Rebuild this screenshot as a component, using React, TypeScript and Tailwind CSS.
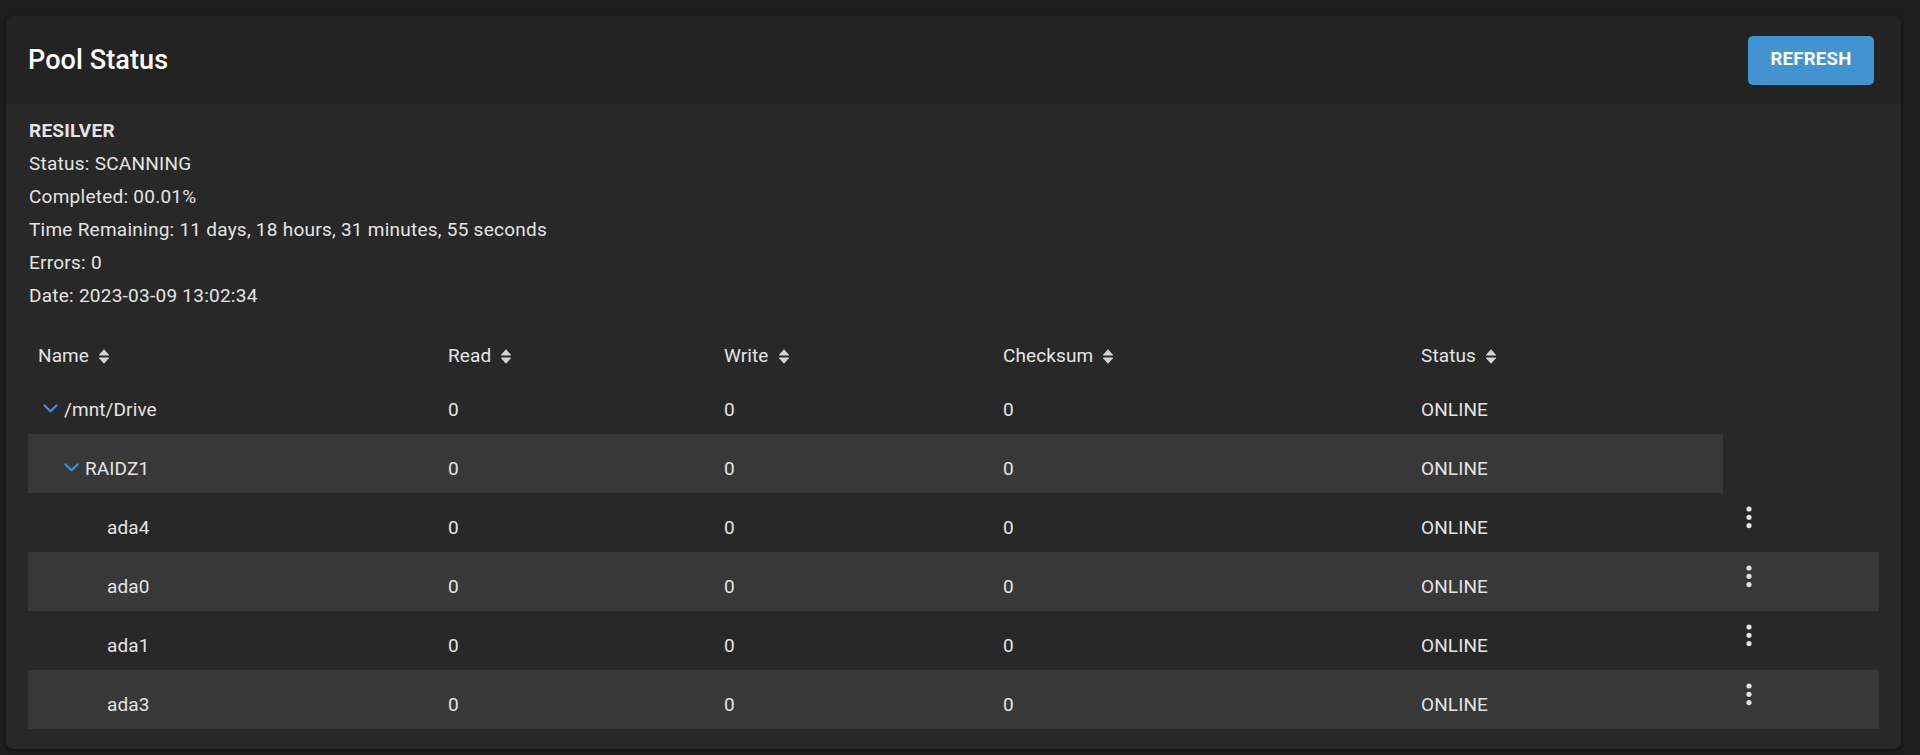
import React from "react"

// rows of the pool tree
type Row = {
  name: string
  level: 0 | 1 | 2
  expandable?: boolean
  disk?: boolean
}

const rows: Row[] = [
  { name: "/mnt/Drive", level: 0, expandable: true },
  { name: "RAIDZ1", level: 1, expandable: true },
  { name: "ada4", level: 2, disk: true },
  { name: "ada0", level: 2, disk: true },
  { name: "ada1", level: 2, disk: true },
  { name: "ada3", level: 2, disk: true },
]

const scanInfo = [
  "Status: SCANNING",
  "Completed: 00.01%",
  "Time Remaining: 11 days, 18 hours, 31 minutes, 55 seconds",
  "Errors: 0",
  "Date: 2023-03-09 13:02:34",
]

function SortIcon() {
  return (
    <svg width="12" height="17" viewBox="0 0 12 17" className="ml-[9px]">
      <path d="M6 1.2 L10.9 6.8 Q11.2 7.4 10.5 7.4 L1.5 7.4 Q0.8 7.4 1.1 6.8 Z" fill="#d4d4d4" />
      <path d="M6 15.8 L10.9 10.2 Q11.2 9.6 10.5 9.6 L1.5 9.6 Q0.8 9.6 1.1 10.2 Z" fill="#d4d4d4" />
    </svg>
  )
}

function Chevron() {
  return (
    <svg width="15" height="9" viewBox="0 0 15 9" className="mr-[6px] mt-[-5px]">
      <polyline points="1.5,1.5 7.5,7.2 13.5,1.5" fill="none" stroke="#3f93d8" strokeWidth="2.2" strokeLinecap="round" strokeLinejoin="round" />
    </svg>
  )
}

function MoreVert() {
  return (
    <svg width="8" height="23" viewBox="0 0 8 23">
      <circle cx="4" cy="3" r="2.6" fill="#e2e2e2" />
      <circle cx="4" cy="11.3" r="2.6" fill="#e2e2e2" />
      <circle cx="4" cy="19.6" r="2.6" fill="#e2e2e2" />
    </svg>
  )
}

const gridCols = "grid grid-cols-[410px_276px_279px_418px_312px_156px]"

export default function App() {
  return (
    <div
      className="w-full h-[755px] bg-[#1e1e1e] pt-[16px] pl-[6px] pr-[19px] pb-[6px]"
      style={{ fontFamily: "Roboto, 'Noto Sans', sans-serif" }}
    >
      <div className="h-full rounded-[7px] bg-[#282828] overflow-hidden shadow-[0_1px_4px_rgba(0,0,0,0.5)]">
        {/* header */}
        <div className="h-[88px] bg-[#232323] flex items-center justify-between pl-[22px] pr-[27px]">
          <h1 className="text-[27px] font-medium text-white tracking-[0.1px]">Pool Status</h1>
          <button className="w-[126px] h-[49px] rounded-[5px] bg-[#4294d0] text-white text-[18.5px] font-bold tracking-[0.3px]">
            REFRESH
          </button>
        </div>

        {/* body */}
        <div className="pl-[22px] pr-[22px] pt-[10px]">
          <div className="pl-[1px] text-[19px] tracking-[0.25px] text-[#e4e4e4] leading-[33px]">
            <div className="font-bold">RESILVER</div>
            {scanInfo.map((line) => (
              <div key={line}>{line}</div>
            ))}
          </div>

          <div className="mt-[8px] text-[19px] tracking-[0.1px] text-[#e4e4e4]">
            <div className={`${gridCols} h-[55px] items-center pt-[17px]`}>
              {["Name", "Read", "Write", "Checksum", "Status"].map((h) => (
                <div key={h} className="pl-[10px] flex items-center">
                  {h}
                  <SortIcon />
                </div>
              ))}
              <div />
            </div>

            {rows.map((r, i) => {
              const striped = i % 2 === 1
              const bg = striped ? "bg-[#383838]" : ""
              const indent = r.level === 0 ? "pl-[15px]" : r.level === 1 ? "pl-[36px]" : "pl-[79px]"
              return (
                <div key={r.name} className={`${gridCols} h-[59px]`}>
                  <div className={`${bg} ${indent} pt-[12px] flex items-center`}>
                    {r.expandable && <Chevron />}
                    {r.name}
                  </div>
                  {["0", "0", "0", "ONLINE"].map((v, j) => (
                    <div key={j} className={`${bg} pl-[10px] pt-[12px] flex items-center`}>
                      {v}
                    </div>
                  ))}
                  {r.disk ? (
                    <div className={`${bg} pl-[22px] pt-[13px]`}>
                      <MoreVert />
                    </div>
                  ) : (
                    <div />
                  )}
                </div>
              )
            })}
          </div>
        </div>
      </div>
    </div>
  )
}
